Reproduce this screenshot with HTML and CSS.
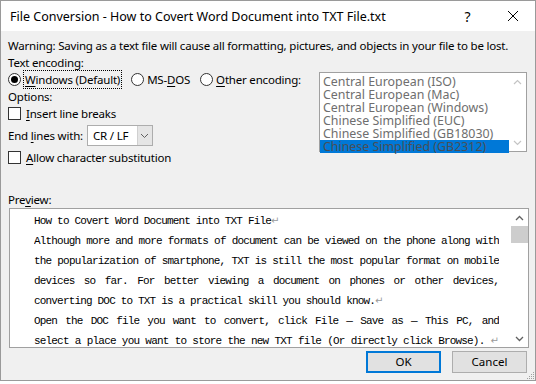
FILE: index.html
```html
<!DOCTYPE html>
<html>
<head>
<meta charset="utf-8">
<link rel="stylesheet" href="styles.css">
</head>
<body>
<div class="window">
  <div class="titlebar">
    <div class="title">File Conversion - How to Covert Word Document into TXT File.txt</div>
    <div class="tb-btn help">?</div>
    <div class="tb-btn close">
      <svg width="12" height="12" viewBox="0 0 12 12"><path d="M1 1 L11 11 M11 1 L1 11" stroke="#000" stroke-width="1" fill="none"/></svg>
    </div>
  </div>
  <div class="content">
    <div class="line">Warning: Saving as a text file will cause all formatting, pictures, and objects in your file to be lost.</div>
    <div class="line">Text encoding:</div>
    <div class="top">
      <div class="left">
        <div class="radio-row">
          <div class="opt"><span class="radio on"></span><span class="focus"><u>W</u>indows (Default)</span></div>
          <div class="opt"><span class="radio"></span><span>MS-<u>D</u>OS</span></div>
          <div class="opt"><span class="radio"></span><span><u>O</u>ther encoding:</span></div>
        </div>
        <div class="line">Options:</div>
        <div class="opt check-row"><span class="check"></span><span><u>I</u>nsert line breaks</span></div>
        <div class="combo-row">
          <span>End <u>l</u>ines with:</span>
          <div class="combo">
            <div class="combo-val">CR / LF</div>
            <div class="combo-btn"><svg width="9" height="6" viewBox="0 0 9 6"><path d="M1 1 L4.5 4.5 L8 1" stroke="#606060" fill="none" stroke-width="1"/></svg></div>
          </div>
        </div>
        <div class="opt check-row2"><span class="check"></span><span><u>A</u>llow character substitution</span></div>
      </div>
      <div class="listbox">
        <div class="items">
          <div class="item">Central European (ISO)</div>
          <div class="item">Central European (Mac)</div>
          <div class="item">Central European (Windows)</div>
          <div class="item">Chinese Simplified (EUC)</div>
          <div class="item">Chinese Simplified (GB18030)</div>
          <div class="item sel">Chinese Simplified (GB2312)</div>
        </div>
        <div class="lb-scroll">
          <svg width="9" height="6" viewBox="0 0 9 6"><path d="M1 5 L4.5 1.5 L8 5" stroke="#c4c4c4" fill="none" stroke-width="1.2"/></svg>
          <svg width="9" height="6" viewBox="0 0 9 6"><path d="M1 1 L4.5 4.5 L8 1" stroke="#c4c4c4" fill="none" stroke-width="1.2"/></svg>
        </div>
      </div>
    </div>
    <div class="line preview-label">Pre<u>v</u>iew:</div>
    <div class="preview">
      <div class="ptext">
        <div class="pl">How to Covert Word Document into TXT File<span class="ret">↵</span></div>
        <div class="pl j">Although more and more formats of document can be viewed on the phone along with</div>
        <div class="pl j">the popularization of smartphone, TXT is still the most popular format on mobile</div>
        <div class="pl j">devices so far. For better viewing a document on phones or other devices,</div>
        <div class="pl">converting DOC to TXT is a practical skill you should know.<span class="ret">↵</span></div>
        <div class="pl j">Open the DOC file you want to convert, click File — Save as — This PC, and</div>
        <div class="pl j">select a place you want to store the new TXT file (Or directly click Browse). <span class="ret">↵</span></div>
      </div>
      <div class="pscroll">
        <div class="arrow"><svg width="9" height="6" viewBox="0 0 9 6"><path d="M1 5 L4.5 1.5 L8 5" stroke="#606060" fill="none" stroke-width="1.3"/></svg></div>
        <div class="thumb"></div>
        <div class="track"></div>
        <div class="arrow"><svg width="9" height="6" viewBox="0 0 9 6"><path d="M1 1 L4.5 4.5 L8 1" stroke="#606060" fill="none" stroke-width="1.3"/></svg></div>
      </div>
    </div>
    <div class="buttons">
      <div class="btn ok">OK</div>
      <div class="btn">Cancel</div>
    </div>
    <svg class="grip" width="10" height="10" viewBox="0 0 10 10">
      <g fill="#a0a0a0">
        <rect x="8" y="2" width="1" height="1"/>
        <rect x="6" y="4" width="1" height="1"/><rect x="8" y="4" width="1" height="1"/>
        <rect x="4" y="6" width="1" height="1"/><rect x="6" y="6" width="1" height="1"/><rect x="8" y="6" width="1" height="1"/>
        <rect x="2" y="8" width="1" height="1"/><rect x="4" y="8" width="1" height="1"/><rect x="6" y="8" width="1" height="1"/><rect x="8" y="8" width="1" height="1"/>
      </g>
    </svg>
  </div>
</div>
</body>
</html>
```
FILE: styles.css
```css
html, body {
  margin: 0;
  padding: 0;
  background: #ffffff;
}
body {
  font-family: "Noto Sans", "Liberation Sans", sans-serif;
  font-size: 11.5px;
  letter-spacing: -0.2px;
  color: #000;
}
.window {
  width: 534px;
  height: 379px;
  border: 1px solid #9a9a9a;
  background: #f0f0f0;
  display: flex;
  flex-direction: column;
}
.titlebar {
  height: 30px;
  background: #fff;
  display: flex;
  align-items: center;
  flex-shrink: 0;
}
.title {
  flex: 1;
  padding-left: 9px;
  font-size: 12.5px;
  letter-spacing: 0;
}
.tb-btn {
  width: 45px;
  display: flex;
  justify-content: center;
  align-items: center;
  font-size: 14px;
}
.close { width: 45px; }
.content {
  position: relative;
  flex: 1;
  padding: 6px 7px 0 7px;
  display: flex;
  flex-direction: column;
}
.line {
  height: 17px;
  line-height: 17px;
  white-space: nowrap;
}
u {
  text-decoration-thickness: 1px;
  text-underline-offset: 2px;
}
.top {
  display: flex;
  align-items: flex-start;
}
.left {
  width: 311px;
  flex-shrink: 0;
  display: flex;
  flex-direction: column;
}
.radio-row {
  display: flex;
  height: 17px;
  align-items: center;
  gap: 10px;
}
.opt {
  display: flex;
  align-items: center;
  height: 17px;
  line-height: 17px;
  white-space: nowrap;
}
.radio {
  width: 11px;
  height: 11px;
  border: 1px solid #333;
  border-radius: 50%;
  background: #fff;
  margin-right: 3px;
  position: relative;
  flex-shrink: 0;
}
.radio.on::after {
  content: "";
  position: absolute;
  left: 2px;
  top: 2px;
  width: 7px;
  height: 7px;
  border-radius: 50%;
  background: #000;
}
.focus {
  outline: 1px dotted #000;
  outline-offset: 0;
  padding: 0 1px;
  height: 17px;
}
.check {
  width: 11px;
  height: 11px;
  border: 1px solid #333;
  background: #fff;
  margin-right: 5px;
  flex-shrink: 0;
}
.combo-row {
  display: flex;
  align-items: center;
  margin-top: 3px;
  height: 21px;
  gap: 4px;
  white-space: nowrap;
}
.combo {
  display: flex;
  width: 64px;
  height: 19px;
  border: 1px solid #adadad;
  background: #fff;
}
.combo-val {
  flex: 1;
  padding-left: 5px;
  line-height: 19px;
}
.combo-btn {
  width: 14px;
  background: #e5e5e5;
  border-left: 1px solid #d0d0d0;
  display: flex;
  align-items: center;
  justify-content: center;
}
.check-row2 { margin-top: 3px; }
.listbox {
  margin-top: 1px;
  width: 206px;
  height: 78px;
  border: 1px solid #a0a0a0;
  background: #fff;
  display: flex;
}
.items {
  flex: 1;
  padding-top: 2px;
}
.item {
  height: 13px;
  line-height: 13px;
  padding-left: 3px;
  color: #6e6e6e;
  white-space: nowrap;
  font-size: 12.4px;
  letter-spacing: 0;
}
.item.sel {
  background: #0078d7;
  color: #4a4f56;
}
.lb-scroll {
  width: 17px;
  display: flex;
  flex-direction: column;
  justify-content: space-between;
  align-items: center;
  padding: 6px 0 5px 0;
}
.preview-label {
  margin-top: 25px;
}
.preview {
  margin-left: 1px;
  width: 518px;
  height: 138px;
  border: 1px solid #a0a0a0;
  background: #fff;
  display: flex;
  overflow: hidden;
}
.ptext {
  width: 465px;
  padding: 2px 0 0 24px;
  font-family: "Liberation Mono", "DejaVu Sans Mono", monospace;
  font-size: 11px;
  letter-spacing: -0.82px;
  color: #000;
}
.pl {
  height: 20px;
  line-height: 20px;
  white-space: nowrap;
}
.pl.j {
  white-space: normal;
  text-align: justify;
  text-align-last: justify;
  overflow: hidden;
}
.ret {
  color: #9a9a9a;
  letter-spacing: 0;
  font-family: "DejaVu Sans", sans-serif;
  font-size: 10px;
}
.pscroll {
  margin-left: auto;
  width: 17px;
  display: flex;
  flex-direction: column;
  background: #fff;
}
.arrow {
  height: 17px;
  display: flex;
  align-items: center;
  justify-content: center;
}
.thumb {
  height: 17px;
  background: #cdcdcd;
}
.track { flex: 1; }
.buttons {
  display: flex;
  justify-content: flex-end;
  gap: 11px;
  margin-top: 3px;
  margin-right: 1px;
}
.btn {
  width: 73px;
  height: 20px;
  line-height: 20px;
  text-align: center;
  background: #e1e1e1;
  border: 1px solid #adadad;
  letter-spacing: 0;
}
.btn.ok {
  width: 71px;
  height: 18px;
  line-height: 18px;
  border: 2px solid #0078d7;
}
.grip {
  position: absolute;
  right: 0;
  bottom: 0;
}
```
